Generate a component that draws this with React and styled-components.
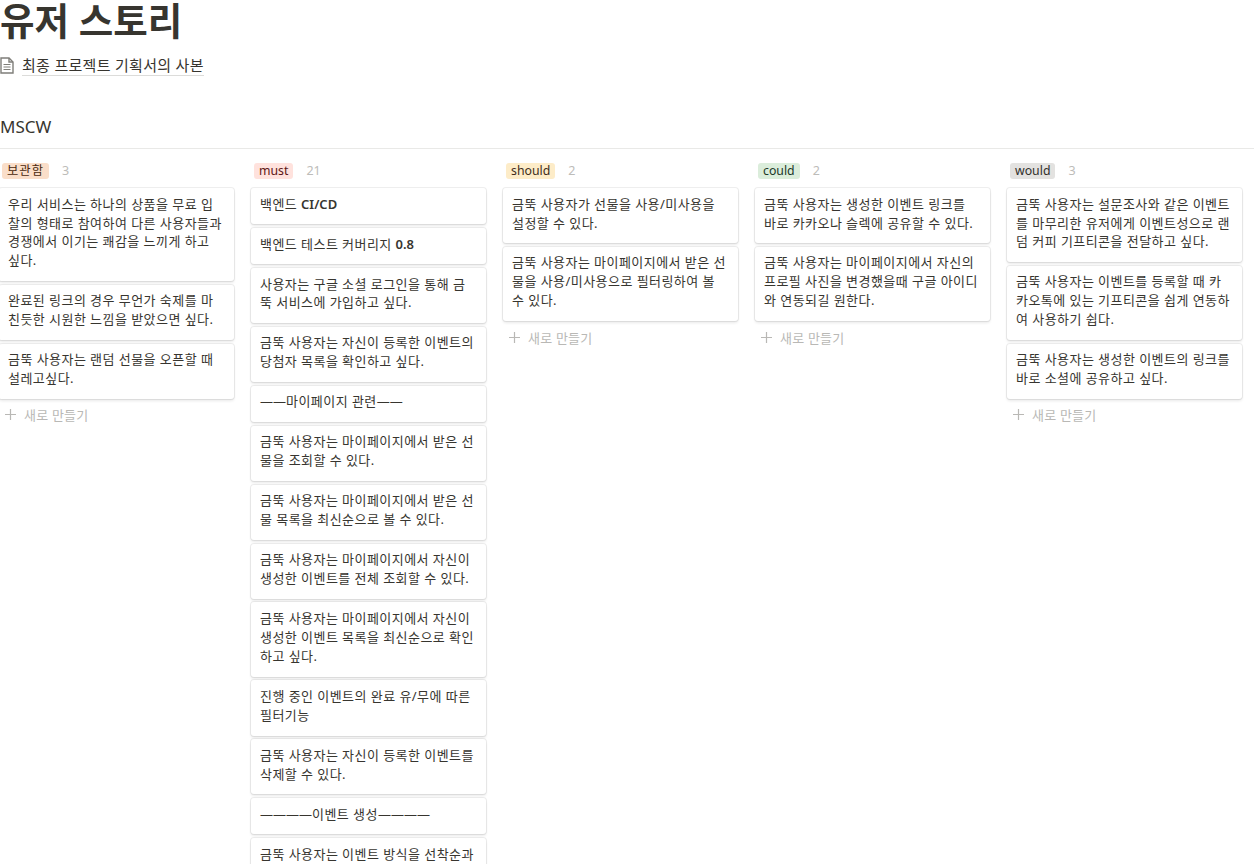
import React from "react"
import styled, { createGlobalStyle } from "styled-components"

const GlobalStyle = createGlobalStyle`
  html, body {
    margin: 0;
    padding: 0;
    background: #fff;
    overflow: hidden;
  }
  body {
    font-family: "Noto Sans", "Noto Sans CJK KR", sans-serif;
    color: #37352f;
  }
`

const Page = styled.div`
  width: 1254px;
  height: 864px;
  overflow: hidden;
`

const Title = styled.h1`
  margin: 0;
  font-size: 37.5px;
  line-height: 41px;
  font-weight: 700;
  color: #37352f;
  white-space: nowrap;
`

const PageLink = styled.div`
  display: flex;
  align-items: center;
  gap: 8px;
  height: 22px;
  margin-top: 13px;
`

const LinkText = styled.span`
  font-size: 15px;
  line-height: 20px;
  border-bottom: 1px solid #dcdcda;
  letter-spacing: 0.3px;
`

const ViewTitle = styled.h2`
  margin: 40px 0 0;
  font-size: 17px;
  line-height: 22px;
  font-weight: 400;
  padding-bottom: 10px;
  border-bottom: 1px solid #e9e9e7;
`

const Board = styled.div`
  display: flex;
  gap: 16px;
  margin: 14px 0 0 -2px;
`

const Column = styled.section`
  width: 236px;
  flex: none;
`

const ColumnHead = styled.div`
  display: flex;
  align-items: center;
  height: 16px;
  margin-bottom: 9px;
  padding-left: 4px;
`

const Tag = styled.span`
  height: 16px;
  line-height: 16px;
  padding: 0 5px;
  border-radius: 3px;
  font-size: 12.3px;
  letter-spacing: ${(p) => (p.$hangul ? "1px" : "0")};
  background: ${(p) => p.$bg};
  color: ${(p) => p.$fg};
`

const Count = styled.span`
  margin-left: 13px;
  font-size: 12.5px;
  line-height: 14px;
  color: #bdbcb9;
`

const Cards = styled.div`
  display: flex;
  flex-direction: column;
  gap: 3.6px;
  padding: 0 0.5px;
`

const Card = styled.article`
  flex: none;
  padding: 6.6px 9px 10.9px 9.5px;
  background: #fff;
  border-radius: 3px;
  box-shadow: 0 0 0 1px rgba(15, 15, 15, 0.07), 0 2px 3px rgba(15, 15, 15, 0.09);
  font-size: 13px;
  line-height: 18.9px;
  letter-spacing: 0.45px;
  color: #37352f;
  white-space: pre-line;
`

const Latin = styled.b`
  font-weight: 600;
  letter-spacing: 0;
`

const Dash = styled.span`
  letter-spacing: 0;
`

const AddRow = styled.div`
  display: flex;
  align-items: center;
  gap: 8px;
  height: 20px;
  margin-top: 6px;
  padding-left: 7px;
  font-size: 13px;
  letter-spacing: 0.2px;
  color: #b9b8b5;
`

const PageIcon = () => (
  <svg width="14" height="17" viewBox="0 0 14 17" fill="none" stroke="#7f7e79" strokeWidth="1.4">
    <path d="M1 1h8l4 4v11H1z" />
    <path d="M9 1v4h4" />
    <path d="M3.5 7.5h7M3.5 10h7M3.5 12.5h7" strokeWidth="1" />
  </svg>
)

const PlusIcon = () => (
  <svg width="11" height="11" viewBox="0 0 11 11" stroke="#b9b8b5" strokeWidth="1.2">
    <path d="M5.5 0v11M0 5.5h11" />
  </svg>
)

const columns = [
  {
    name: "보관함", hangul: true, count: 3, bg: "#fadec9", fg: "#49290e",
    cards: [
      "우리 서비스는 하나의 상품을 무료 입\n찰의 형태로 참여하여 다른 사용자들과\n경쟁에서 이기는 쾌감을 느끼게 하고\n싶다.",
      "완료된 링크의 경우 무언가 숙제를 마\n친듯한 시원한 느낌을 받았으면 싶다.",
      "금뚝 사용자는 랜덤 선물을 오픈할 때\n설레고싶다.",
    ],
  },
  {
    name: "must", count: 21, bg: "#ffe2dd", fg: "#5d1715",
    cards: [
      <>백엔드 <Latin>CI/CD</Latin></>,
      <>백엔드 테스트 커버리지 <Latin>0.8</Latin></>,
      "사용자는 구글 소셜 로그인을 통해 금\n뚝 서비스에 가입하고 싶다.",
      "금뚝 사용자는 자신이 등록한 이벤트의\n당첨자 목록을 확인하고 싶다.",
      <><Dash>——</Dash>마이페이지 관련<Dash>——</Dash></>,
      "금뚝 사용자는 마이페이지에서 받은 선\n물을 조회할 수 있다.",
      "금뚝 사용자는 마이페이지에서 받은 선\n물 목록을 최신순으로 볼 수 있다.",
      "금뚝 사용자는 마이페이지에서 자신이\n생성한 이벤트를 전체 조회할 수 있다.",
      "금뚝 사용자는 마이페이지에서 자신이\n생성한 이벤트 목록을 최신순으로 확인\n하고 싶다.",
      "진행 중인 이벤트의 완료 유/무에 따른\n필터기능",
      "금뚝 사용자는 자신이 등록한 이벤트를\n삭제할 수 있다.",
      <><Dash>————</Dash>이벤트 생성<Dash>————</Dash></>,
      "금뚝 사용자는 이벤트 방식을 선착순과",
    ],
  },
  {
    name: "should", count: 2, bg: "#fdecc8", fg: "#402c1b",
    cards: [
      "금뚝 사용자가 선물을 사용/미사용을\n설정할 수 있다.",
      "금뚝 사용자는 마이페이지에서 받은 선\n물을 사용/미사용으로 필터링하여 볼\n수 있다.",
    ],
  },
  {
    name: "could", count: 2, bg: "#dbeddb", fg: "#1c3829",
    cards: [
      "금뚝 사용자는 생성한 이벤트 링크를\n바로 카카오나 슬렉에 공유할 수 있다.",
      "금뚝 사용자는 마이페이지에서 자신의\n프로필 사진을 변경했을때 구글 아이디\n와 연동되길 원한다.",
    ],
  },
  {
    name: "would", count: 3, bg: "#e3e2e0", fg: "#32302c",
    cards: [
      "금뚝 사용자는 설문조사와 같은 이벤트\n를 마무리한 유저에게 이벤트성으로 랜\n덤 커피 기프티콘을 전달하고 싶다.",
      "금뚝 사용자는 이벤트를 등록할 때 카\n카오톡에 있는 기프티콘을 쉽게 연동하\n여 사용하기 쉽다.",
      "금뚝 사용자는 생성한 이벤트의 링크를\n바로 소셜에 공유하고 싶다.",
    ],
  },
]

const App = () => {
  return (
    <Page>
      <GlobalStyle />
      <Title>유저 스토리</Title>
      <PageLink>
        <PageIcon />
        <LinkText>최종 프로젝트 기획서의 사본</LinkText>
      </PageLink>
      <ViewTitle>MSCW</ViewTitle>
      <Board>
        {columns.map((col) => (
          <Column key={col.name}>
            <ColumnHead>
              <Tag $bg={col.bg} $fg={col.fg} $hangul={col.hangul}>{col.name}</Tag>
              <Count>{col.count}</Count>
            </ColumnHead>
            <Cards>
              {col.cards.map((card, i) => (
                <Card key={i}>{card}</Card>
              ))}
            </Cards>
            <AddRow>
              <PlusIcon />
              새로 만들기
            </AddRow>
          </Column>
        ))}
      </Board>
    </Page>
  )
}

export default App
